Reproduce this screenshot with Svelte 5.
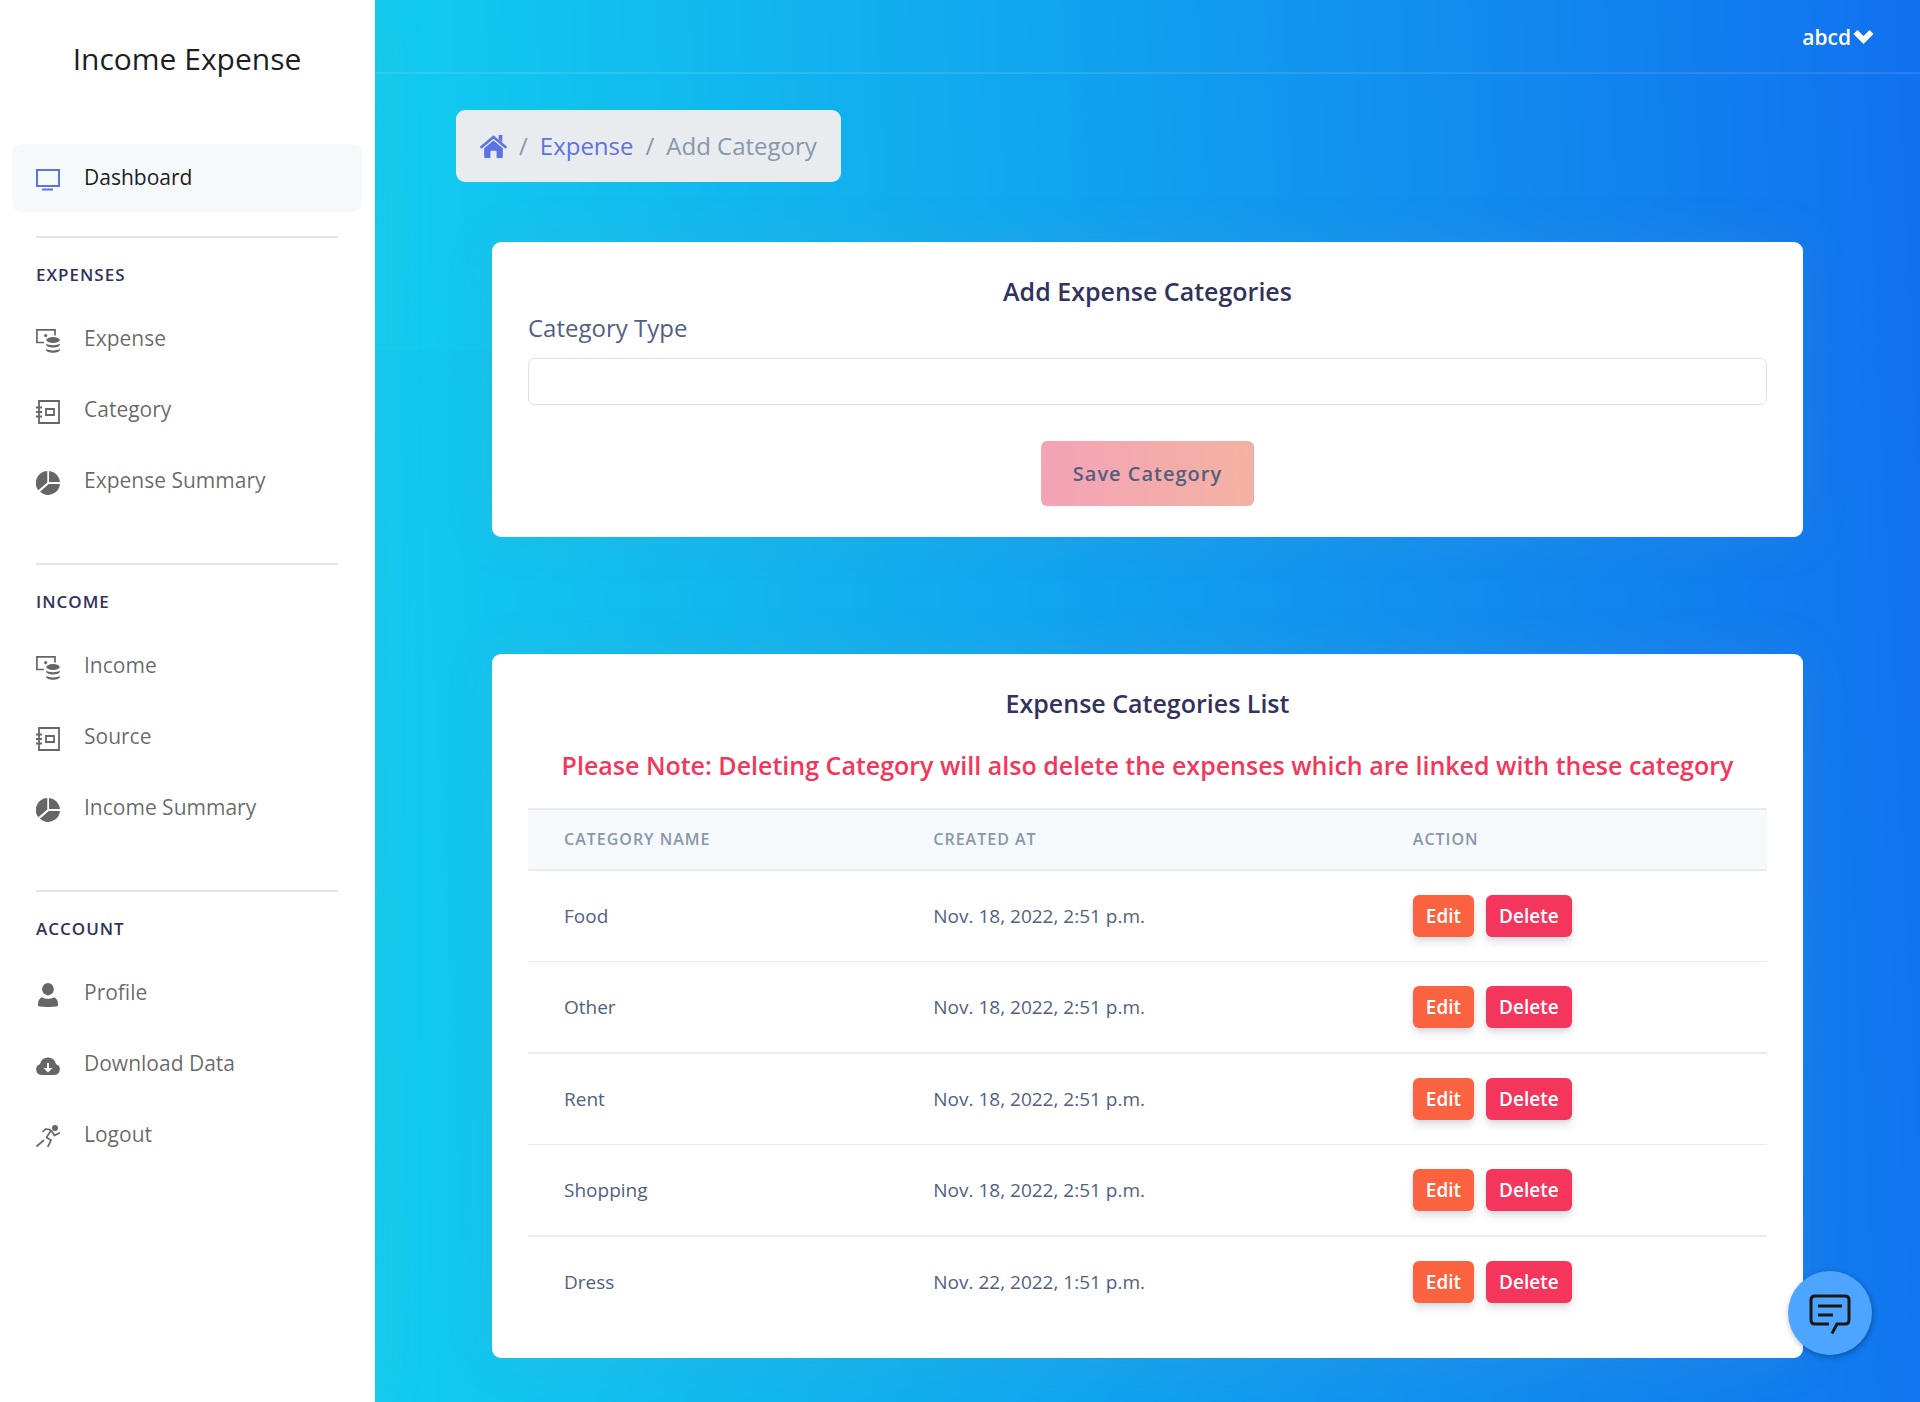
<script>
  const groups = [
    { title: 'Expenses', items: [['money', 'Expense'], ['book', 'Category'], ['pie', 'Expense Summary']] },
    { title: 'Income', items: [['money', 'Income'], ['book', 'Source'], ['pie', 'Income Summary']] },
    { title: 'Account', items: [['user', 'Profile'], ['cloud', 'Download Data'], ['run', 'Logout']] },
  ];
  const rows = [
    ['Food', 'Nov. 18, 2022, 2:51 p.m.'],
    ['Other', 'Nov. 18, 2022, 2:51 p.m.'],
    ['Rent', 'Nov. 18, 2022, 2:51 p.m.'],
    ['Shopping', 'Nov. 18, 2022, 2:51 p.m.'],
    ['Dress', 'Nov. 22, 2022, 1:51 p.m.'],
  ];
  let category = $state('');
</script>

{#snippet icon(name)}
  <svg class="icon" viewBox="0 0 24 24" aria-hidden="true">
    {#if name === 'tv'}
      <path fill="none" stroke="currentColor" stroke-width="2" d="M1 2h22v16H1zM6 21.500h11" />
    {:else if name === 'money'}
      <path fill="none" stroke="currentColor" stroke-width="1.7" d="M8 13.500H.9V.9H19v5.600" />
      <circle cx="9.700" cy="6.600" r="1.600" fill="currentColor" />
      <ellipse cx="17" cy="11" rx="6.800" ry="2.900" fill="currentColor" />
      <path fill="currentColor" d="M10.200 14.500c2 2.300 11.600 2.300 13.600 0v1.300c0 1.500-3 2.800-6.800 2.800s-6.800-1.300-6.800-2.800zM10.200 19.700c2 2.300 11.600 2.300 13.600 0v1.300c0 1.500-3 2.800-6.800 2.800s-6.800-1.300-6.800-2.800z" />
    {:else if name === 'book'}
      <path fill="none" stroke="currentColor" stroke-width="1.800" d="M3 1h20v22H3zM10 9h8v6h-8zM0 7.500h6M0 12h6M0 16.500h6" />
    {:else if name === 'pie'}
      <path fill="currentColor" d="M11.300 0v11.600L2.300 19.300A12 12 0 0 1 11.300 0zM13 0a12 12 0 0 1 11 11H13zM24 13A12 12 0 0 1 4 20.800L12.700 13z" />
    {:else if name === 'user'}
      <ellipse cx="12" cy="6.200" rx="5.800" ry="6.200" fill="currentColor" />
      <path fill="currentColor" d="M6 14.200c3.500 2 8.500 2 12 0 2.500.8 4 3.500 4 6.500V23c-5 1.300-15 1.300-20 0v-2.300c0-3 1.500-5.700 4-6.500z" />
    {:else if name === 'cloud'}
      <path fill="currentColor" fill-rule="evenodd" d="M5.500 21A5.500 5.500 0 0 1 3.900 10.300a8.200 8.200 0 0 1 16.200 0A5.500 5.500 0 0 1 18.500 21zM11 9v5H7.500l4.500 4.500 4.500-4.500H13V9z" />
    {:else}
      <circle cx="19" cy="3" r="3" fill="currentColor" />
      <path fill="none" stroke="currentColor" stroke-width="1.700" stroke-linecap="round" stroke-linejoin="round" d="M7 6.500 9.500 4l4 .5 2.500 2 2.500 4 4.800-2.500M14 7l-3.500 5.500 4.500 2.800-3 6M1 21l6.500-5.500" />
    {/if}
  </svg>
{/snippet}

<div class="app">
  <aside class="sidebar">
    <a class="brand" href="#home">Income Expense</a>
    <nav aria-label="Main">
      <a class="link active" href="#dashboard">{@render icon('tv')}<span>Dashboard</span></a>
      {#each groups as group}
        <section class="group">
          <hr />
          <h2>{group.title}</h2>
          {#each group.items as [glyph, label]}
            <a class="link" href="#{label}">{@render icon(glyph)}<span>{label}</span></a>
          {/each}
        </section>
      {/each}
    </nav>
  </aside>

  <div class="page">
    <header class="topbar">
      <button class="account" type="button">
        abcd
        <svg class="chevron" viewBox="0 0 20 14" aria-hidden="true"><path fill="currentColor" d="M4 0 0 4l10 10L20 4l-4-4-6 6z" /></svg>
      </button>
    </header>

    <main>
      <nav class="crumbs" aria-label="Breadcrumb">
        <a href="#home" aria-label="Home">
          <svg class="home" viewBox="0 0 26 22" aria-hidden="true">
            <path fill="none" stroke="currentColor" stroke-width="2.600" stroke-linecap="round" stroke-linejoin="round" d="M1.500 11.500 13 1.800l11.500 9.700" />
            <path fill="currentColor" d="M18 0h3.500v7L18 4zM13 5.300l9 7.500V21q0 1-1 1h-5v-6q0-1-1-1h-4q-1 0-1 1v6H5q-1 0-1-1v-8.200z" />
          </svg>
        </a>
        <span>/</span>
        <a href="#expense">Expense</a>
        <span>/</span>
        <span>Add Category</span>
      </nav>

      <section class="card">
        <h1>Add Expense Categories</h1>
        <form>
          <label for="category">Category Type</label>
          <input id="category" type="text" bind:value={category} />
          <button class="save" type="button">Save Category</button>
        </form>
      </section>

      <section class="card">
        <h1>Expense Categories List</h1>
        <p class="note">Please Note: Deleting Category will also delete the expenses which are linked with these category</p>
        <table>
          <thead>
            <tr><th>Category Name</th><th>Created At</th><th>Action</th></tr>
          </thead>
          <tbody>
            {#each rows as [name, date]}
              <tr>
                <td>{name}</td>
                <td>{date}</td>
                <td>
                  <div class="actions">
                    <button class="edit" type="button">Edit</button>
                    <button class="delete" type="button">Delete</button>
                  </div>
                </td>
              </tr>
            {/each}
          </tbody>
        </table>
      </section>
    </main>
  </div>

  <button class="chat" type="button" aria-label="Open chat">
    <svg viewBox="0 0 42 40" aria-hidden="true">
      <path fill="none" stroke="currentColor" stroke-width="3" d="M20 30H6q-4 0-4-4V6q0-4 4-4h30q4 0 4 4v20q0 4-4 4h-8l-5 9.500M9 12h24M9 21h15" />
    </svg>
  </button>
</div>

<style>
  :global(body) {
    margin: 0;
  }
  .app {
    display: flex;
    min-height: 100vh;
    font-family: 'Open Sans', sans-serif;
    font-size: 24px;
    line-height: 36px;
    color: #525f7f;
  }
  a {
    text-decoration: none;
  }
  button {
    font-family: inherit;
    cursor: pointer;
  }
  .sidebar {
    position: relative;
    z-index: 1;
    box-sizing: border-box;
    width: 375px;
    flex: none;
    padding: 36px 13px 36px 12px;
    background: #fff;
    box-shadow: 0 0 48px rgba(136, 152, 170, 0.15);
  }
  .brand {
    display: block;
    padding: 5px 0 67px;
    font-size: 30px;
    text-align: center;
    color: rgba(0, 0, 0, 0.9);
  }
  .link {
    display: flex;
    align-items: center;
    gap: 24px;
    height: 68px;
    padding: 0 24px;
    margin-bottom: 3px;
    border-radius: 9px;
    font-size: 21px;
    line-height: 32px;
    color: rgba(0, 0, 0, 0.6);
  }
  .link span {
    padding-bottom: 3px;
  }
  .active {
    background: #f6f9fc;
    color: rgba(0, 0, 0, 0.9);
  }
  .active .icon {
    color: #5e72e4;
  }
  .icon {
    width: 24px;
    height: 24px;
    margin-top: 4px;
    flex: none;
  }
  hr {
    height: 2px;
    margin: 24px 24px 23px;
    border: 0;
    background: #e5e5e5;
  }
  .group {
    padding-bottom: 21px;
  }
  h2 {
    margin: 0 24px;
    padding-bottom: 16px;
    font-size: 17px;
    font-weight: 600;
    line-height: 28px;
    letter-spacing: 1px;
    text-transform: uppercase;
    color: #32325d;
  }
  .page {
    flex: 1;
    min-width: 0;
    background:
      linear-gradient(87deg, #11cdef, #1171ef) top / 100% 350px no-repeat,
      linear-gradient(87deg, #11cdef, #1171ef);
  }
  .topbar {
    display: flex;
    justify-content: flex-end;
    align-items: center;
    height: 70px;
    padding: 2px 46px 0 0;
    border-bottom: 2px solid rgba(255, 255, 255, 0.1);
  }
  .account {
    display: flex;
    align-items: center;
    gap: 2px;
    padding: 0;
    border: 0;
    background: none;
    font-size: 21px;
    font-weight: 600;
    line-height: 32px;
    color: #fff;
  }
  .chevron {
    width: 21px;
    height: 14px;
  }
  main {
    padding: 36px 117px 44px 81px;
  }
  .crumbs {
    display: flex;
    align-items: center;
    gap: 12px;
    width: max-content;
    padding: 18px 24px;
    border-radius: 9px;
    background: #e9ecef;
    color: #8898aa;
  }
  .crumbs a {
    color: #5e72e4;
  }
  .home {
    display: block;
    width: 27px;
    height: 23px;
  }
  .card {
    padding: 36px 36px 31px;
    margin: 60px 0 0 36px;
    border-radius: 9px;
    background: #fff;
    box-shadow: 0 0 48px rgba(136, 152, 170, 0.15);
  }
  .card + .card {
    margin-top: 117px;
  }
  h1,
  .note {
    margin: 0;
    font-size: 25px;
    font-weight: 600;
    line-height: 27px;
    text-align: center;
    color: #32325d;
  }
  form {
    display: flex;
    flex-direction: column;
    padding-top: 5px;
  }
  input {
    box-sizing: border-box;
    height: 47px;
    margin: 12px 0 36px;
    padding: 0 18px;
    border: 1px solid #dee2e6;
    border-radius: 6px;
    font: inherit;
  }
  .save {
    align-self: center;
    padding: 15px 31px;
    border: 1px solid transparent;
    border-radius: 6px;
    background: linear-gradient(87deg, #f4a3b7, #f4b2a2);
    font-size: 20px;
    font-weight: 600;
    line-height: 33px;
    letter-spacing: 1px;
    color: #525f7f;
  }
  .note {
    margin: 35px 0 29px;
    color: #f5365c;
  }
  table {
    width: 100%;
    border-collapse: collapse;
  }
  th {
    padding: 18px 36px;
    border-top: 2px solid #e9ecef;
    border-bottom: 2px solid #e9ecef;
    background: #f6f9fc;
    font-size: 16px;
    font-weight: 600;
    line-height: 23px;
    letter-spacing: 1px;
    text-align: left;
    text-transform: uppercase;
    color: #8898aa;
  }
  td {
    padding: 24px 36px;
    border-top: 1px solid #e9ecef;
    font-size: 19px;
    line-height: 30px;
  }
  tr:nth-child(odd) td {
    border-top-width: 2px;
  }
  .actions {
    display: flex;
    gap: 12px;
  }
  .actions button {
    padding: 6px 13px;
    border: 0;
    border-radius: 6px;
    font-size: 19px;
    font-weight: 600;
    line-height: 30px;
    color: #fff;
    box-shadow: 0 6px 9px rgba(50, 50, 93, 0.11), 0 2px 4px rgba(0, 0, 0, 0.08);
  }
  .actions .edit {
    background: #fb6340;
  }
  .actions .delete {
    background: #f5365c;
  }
  .chat {
    position: fixed;
    right: 48px;
    bottom: 47px;
    z-index: 2;
    display: grid;
    place-items: center;
    width: 84px;
    height: 84px;
    padding: 2px 0 0;
    border: 0;
    border-radius: 50%;
    background: #4da5ff;
    color: #181818;
    box-shadow: 1px 2px 6px rgba(0, 0, 0, 0.3);
  }
  .chat svg {
    width: 42px;
    height: 40px;
  }
</style>
